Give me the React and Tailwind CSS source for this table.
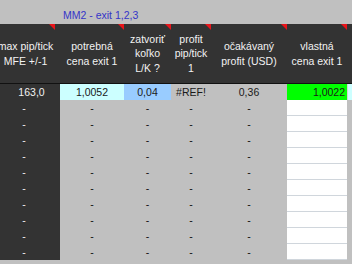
import React from "react";

// stĺpce: max pip/tick | potrebná | zatvoriť | profit | očakávaný | vlastná | (ďalší)
const COLS = "grid grid-cols-[60px_64px_47px_40px_76px_60px_5px]";
const FONT = { fontFamily: '"Liberation Sans", Arial, sans-serif' };

function Flag({ className = "right-0" }) {
    return (
        <svg className={`absolute top-0 ${className}`} width="6" height="6" viewBox="0 0 6 6">
            <polygon points="0,0 6,0 6,6" fill="#e8141a" />
        </svg>
    );
}

function Head({ lines, flag = true, flagClass, className = "" }) {
    return (
        <div className={`relative flex flex-col items-center justify-center text-center ${className}`}>
            {flag && <Flag className={flagClass} />}
            {lines.map((l, i) => (
                <span key={i} className="whitespace-nowrap">{l}</span>
            ))}
        </div>
    );
}

export default function App() {
    const rows = Array.from({ length: 10 });

    return (
        <div className="w-[352px] h-[264px] overflow-hidden bg-[#c0c0c0] text-[10.5px] leading-[14.5px]" style={FONT}>
            {/* horný pás s nadpisom */}
            <div className="h-[24px] pl-[63px] pt-[8px] text-[#3535c8] whitespace-nowrap">MM2 - exit 1,2,3</div>

            {/* hlavička */}
            <div className={`${COLS} h-[60px] bg-[#333333] text-[#f2f2f2] border-b border-[#111111]`}>
                <Head lines={["max pip/tick", "MFE +/-1"]} flagClass="right-[5px]" className="pr-[9px]" />
                <Head lines={["potrebná", "cena exit 1"]} />
                <Head lines={["zatvoriť", "koľko", "L/K ?"]} />
                <Head lines={["profit", "pip/tick", "1"]} />
                <Head lines={["očakávaný", "profit (USD)"]} />
                <Head lines={["vlastná", "cena exit 1"]} />
                <div />
            </div>

            {/* prvý riadok s hodnotami */}
            <div className={`${COLS} h-[16px] leading-[16px] text-[#1a1a1a]`}>
                <div className="bg-[#333333] text-[#f2f2f2] text-center pl-[3px]">163,0</div>
                <div className="bg-[#ccffff] text-center">1,0052</div>
                <div className="bg-[#99ccff] text-center">0,04</div>
                <div className="text-center">#REF!</div>
                <div className="text-center">0,36</div>
                <div className="bg-[#00ff00] text-right pr-[2px]">1,0022</div>
                <div className="bg-[#ccffff] border-l border-[#d4d4d4]" />
            </div>

            {rows.map((_, i) => (
                <div key={i} className={`${COLS} h-[16px] leading-[16px] text-[#111111]`}>
                    <div className="bg-[#333333] text-[#f2f2f2] text-center pr-[12px]">-</div>
                    <div className="text-center">-</div>
                    <div className="text-center">-</div>
                    <div className="text-center">-</div>
                    <div className="text-center">-</div>
                    <div className="bg-white border-b border-[#d0d6dc]" />
                    <div />
                </div>
            ))}
        </div>
    );
}
